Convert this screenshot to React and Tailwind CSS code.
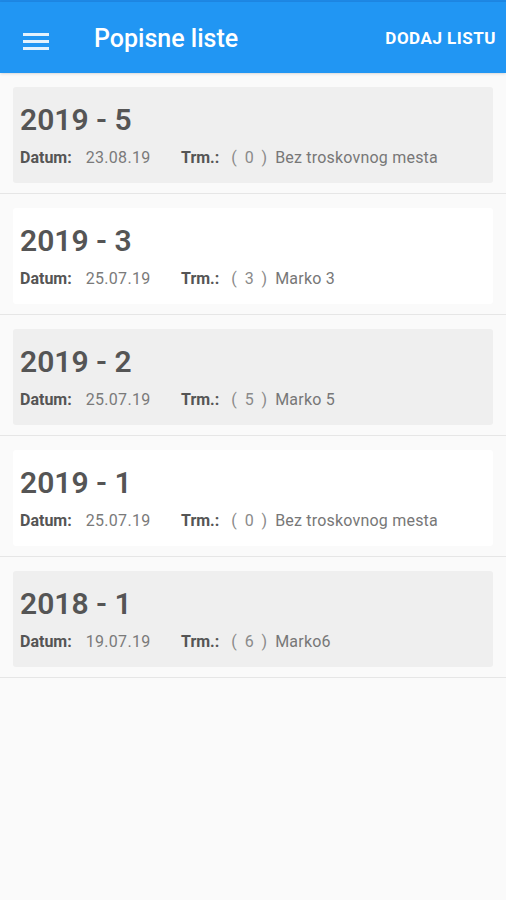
import React from "react";

const items = [
  { t: "2019 - 5", d: "23.08.19", n: "0", m: "Bez troskovnog mesta", g: true },
  { t: "2019 - 3", d: "25.07.19", n: "3", m: "Marko 3", g: false },
  { t: "2019 - 2", d: "25.07.19", n: "5", m: "Marko 5", g: true },
  { t: "2019 - 1", d: "25.07.19", n: "0", m: "Bez troskovnog mesta", g: false },
  { t: "2018 - 1", d: "19.07.19", n: "6", m: "Marko6", g: true },
];

export default function App() {
  return (
    <div className="w-[506px] h-[900px] bg-[#fafafa] overflow-hidden" style={{ fontFamily: "Roboto, 'Noto Sans', sans-serif" }}>
      <div className="bg-[#2196f3]">
        <div className="h-[2px] bg-[#1e88e5]" />
        <div className="h-[71px] flex items-center shadow-sm">
          <div className="w-[94px] pl-[23px] flex items-center pt-[8px]">
            <svg width="26" height="17" viewBox="0 0 26 17">
              <rect x="0" y="0" width="26" height="3" fill="#e3f2fd" />
              <rect x="0" y="7" width="26" height="3" fill="#e3f2fd" />
              <rect x="0" y="14" width="26" height="3" fill="#e3f2fd" />
            </svg>
          </div>
          <div className="text-white text-[25px] font-medium leading-none flex-1 pt-[2px]">Popisne liste</div>
          <div className="text-white text-[17px] font-bold pr-[10px] pt-[2px] tracking-[0.5px]">DODAJ LISTU</div>
        </div>
      </div>
      <div>
        {items.map((it, i) => (
          <div key={i} className="pt-[14px] pb-[10px] px-[13px] border-b border-[#e6e6e6]">
            <div className={`h-[96px] rounded-[3px] px-[7px] pt-[15px] ${it.g ? "bg-[#efefef]" : "bg-white"}`}>
              <div className="text-[30px] font-semibold leading-[36px] text-[#555555]">{it.t}</div>
              <div className="flex items-center text-[16px] leading-[20px] mt-[10px]">
                <div className="w-[161px] flex">
                  <span className="font-bold text-[#555555]">Datum:</span>
                  <span className="ml-[14px] text-[#7a7a7a] tracking-[0.3px]">{it.d}</span>
                </div>
                <span className="font-bold text-[#555555]">Trm.:</span>
                <span className="ml-[12px] text-[#8a8a8a] whitespace-pre">(  {it.n}  )</span>
                <span className="ml-[8px] text-[#777777] tracking-[0.2px]">{it.m}</span>
              </div>
            </div>
          </div>
        ))}
      </div>
    </div>
  );
}
